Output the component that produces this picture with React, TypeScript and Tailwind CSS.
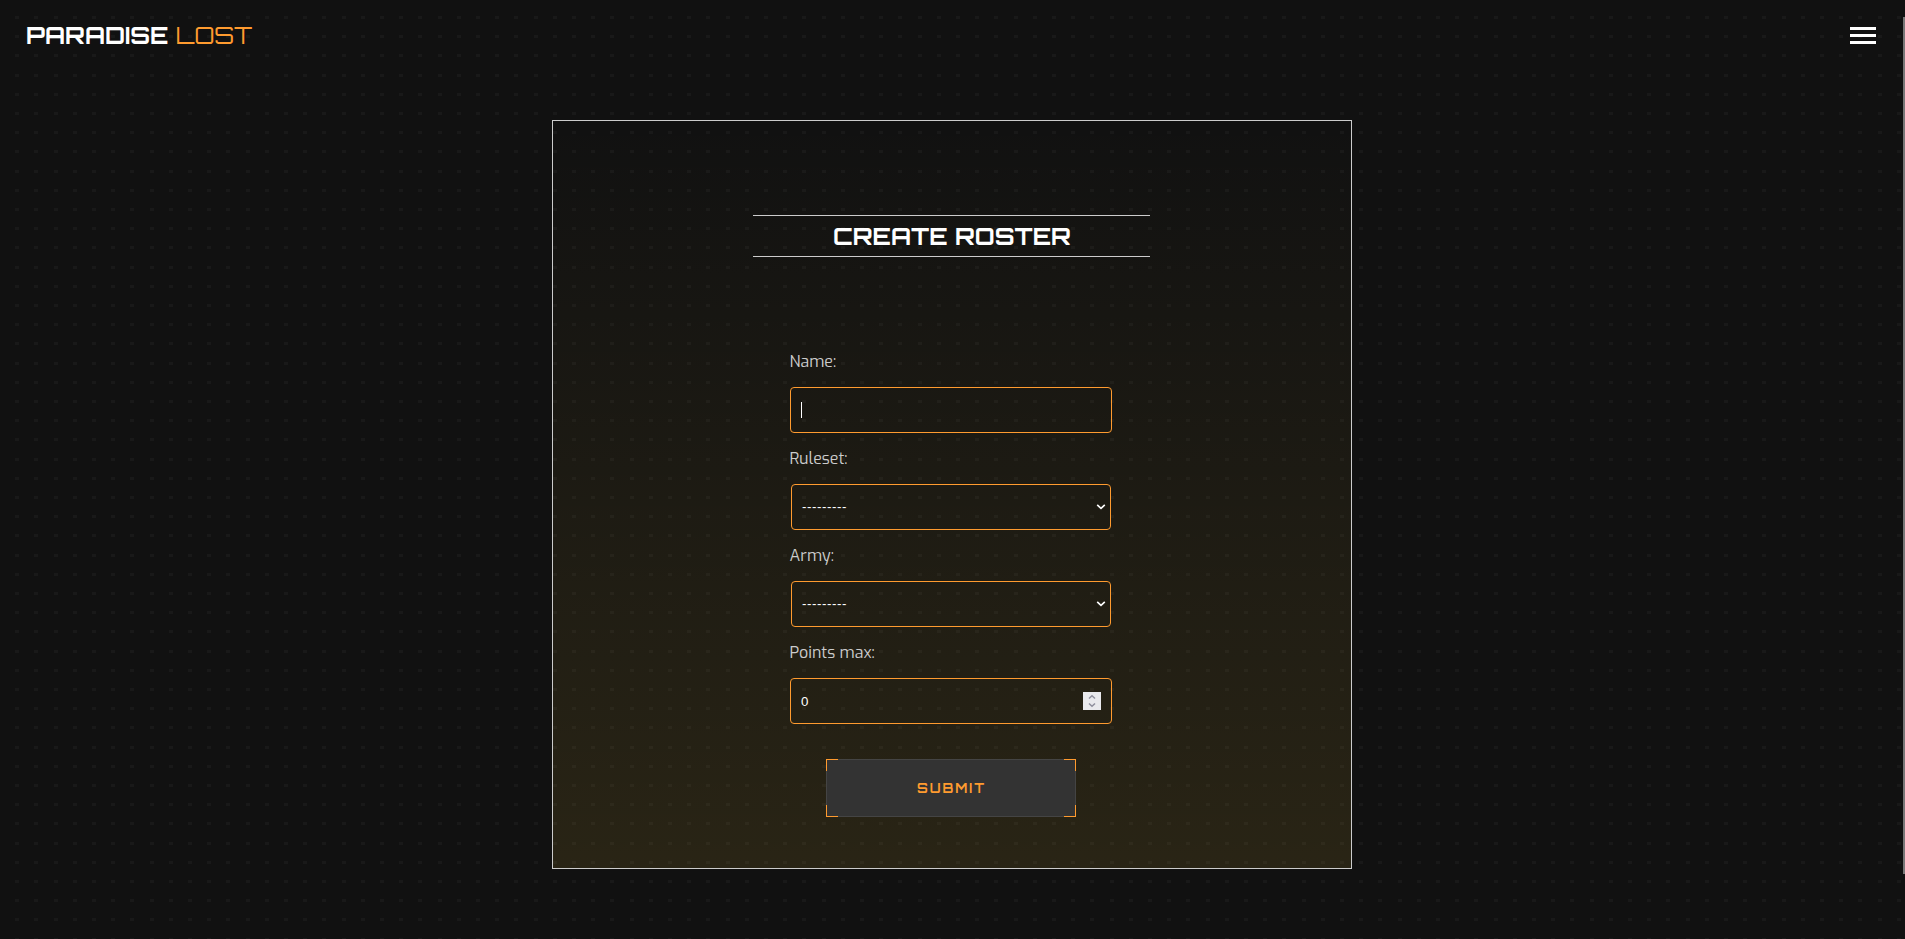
import type { ReactNode } from "react";

const PITCH = 19.2;

function dotPath() {
  let d = "";
  for (let r = 0; r < 49; r++) {
    const y = Math.round(16 + r * PITCH);
    for (let c = 0; c < 99; c++) {
      const x = Math.round(15.2 + c * PITCH);
      d += `M${x} ${y}h4v3h-4z`;
    }
  }
  return d;
}

const DOTS = dotPath();

function DotGrid() {
  return (
    <svg className="pointer-events-none absolute inset-0" width="1905" height="939" shapeRendering="crispEdges" aria-hidden="true">
      <path d={DOTS} fill="#ffffff" fillOpacity="0.035" />
    </svg>
  );
}

function Field({ label, children }: { label: string; children: ReactNode }) {
  return (
    <div className="flex h-[97px] w-[322px] flex-col">
      <label className="-ml-[0.5px] flex h-[38px] items-start pt-px font-['Exo','Exo_2','Open_Sans',sans-serif] text-base leading-6 text-[#cccccc]">
        <span>{label}</span>
      </label>
      {children}
    </div>
  );
}

function SelectBox() {
  return (
    <div className="mx-px flex h-[46px] items-center justify-between rounded-[4px] border border-[#ff9b2f] pr-1 pl-[10px] text-white">
      <span className="font-['Liberation_Sans',Arial,sans-serif] text-[13.33px] tracking-[0.56px]">---------</span>
      <svg width="10" height="6" viewBox="0 0 10 6" fill="none" stroke="currentColor" strokeWidth="1.6" aria-hidden="true">
        <path d="M1.2 0.8 5 4.4 8.8 0.8" />
      </svg>
    </div>
  );
}

function Corner({ className }: { className: string }) {
  return <span className={`absolute size-3 border-[#ff9b2f] ${className}`} />;
}

export default function App() {
  return (
    <div className="relative h-[939px] w-full overflow-hidden bg-[#111111]">
      <DotGrid />
      <header className="relative flex h-[120px] items-start justify-between pr-[29px] pl-[26px]">
        <h1 className="mt-[21px] flex font-['Orbitron','DejaVu_Sans',sans-serif] text-2xl leading-7 whitespace-pre">
          <span className="font-bold text-white">PARADISE </span>
          <span className="text-[#ff9b2f]">LOST</span>
        </h1>
        <button className="mt-[27px] flex w-[26px] flex-col gap-1" aria-label="Menu">
          <span className="h-[3px] bg-white" />
          <span className="h-[3px] bg-white" />
          <span className="h-[3px] bg-white" />
        </button>
      </header>

      <main className="relative ml-[552px] flex h-[749px] w-[800px] flex-col items-center border border-[#cccccc] bg-linear-to-b from-[rgba(255,207,57,0)] to-[rgba(255,207,57,0.1)] pr-[2px]">
        <h2 className="mt-[94px] ml-[200px] flex h-[42px] w-[397px] items-center justify-center self-start border-y border-[#cccccc] pl-px font-['Orbitron','DejaVu_Sans',sans-serif] text-2xl font-bold text-white">
          <span>CREATE ROSTER</span>
        </h2>
        <form className="mt-[92px] flex flex-col items-center">
          <Field label="Name:">
            <div className="flex h-[46px] items-center rounded-[4px] border border-[#ff9b2f] pl-[10px]">
              <span className="h-4 w-px bg-white" />
            </div>
          </Field>
          <Field label="Ruleset:">
            <SelectBox />
          </Field>
          <Field label="Army:">
            <SelectBox />
          </Field>
          <Field label="Points max:">
            <div className="flex h-[46px] items-center justify-between rounded-[4px] border border-[#ff9b2f] pr-[10px] pl-[10px]">
              <span className="pt-px font-['Liberation_Sans',Arial,sans-serif] text-[13.33px] text-white">0</span>
              <span className="flex size-[18px] items-center justify-center bg-[#e9e9ed]">
                <svg width="8" height="14" viewBox="0 0 8 14" fill="none" stroke="#8f8f9d" strokeWidth="1.5" aria-hidden="true">
                  <path d="M1 4.5 4 1.7 7 4.5M1 9.5 4 12.3 7 9.5" />
                </svg>
              </span>
            </div>
          </Field>
          <button type="button" className="relative mt-[22px] flex h-[58px] w-[250px] items-center justify-center border border-[#444444] bg-[#333333] pt-[2px] pl-px font-['Orbitron','DejaVu_Sans',sans-serif] text-[13px] font-bold tracking-[2px] text-[#ff9b2f]">
            <span>SUBMIT</span>
            <Corner className="-top-px -left-px border-t border-l" />
            <Corner className="-top-px -right-px border-t border-r" />
            <Corner className="-bottom-px -left-px border-b border-l" />
            <Corner className="-right-px -bottom-px border-r border-b" />
          </button>
        </form>
      </main>
      <div className="absolute top-[17px] right-0 h-[857px] w-[2px] bg-[#777777]" />
    </div>
  );
}
